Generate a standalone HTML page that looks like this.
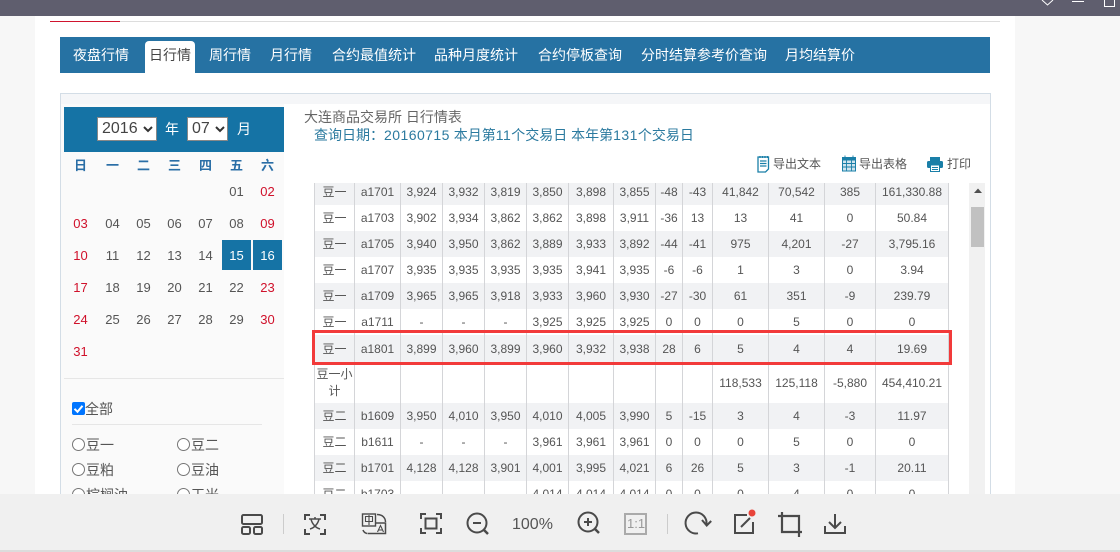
<!DOCTYPE html>
<html><head><meta charset="utf-8">
<style>
*{box-sizing:border-box}
html,body{margin:0;padding:0}
body{width:1120px;height:552px;overflow:hidden;position:relative;background:#f7f7f7;font-family:"Liberation Sans","Noto Sans CJK SC",sans-serif;color:#555}
.a{position:absolute;white-space:nowrap}
.nav{top:38px;height:36px;line-height:35px;font-size:14px;color:#fff;position:absolute;white-space:nowrap}
.wk,.d{position:absolute;width:29px;text-align:center;font-size:13px;height:20px;line-height:20px}
.wk{font-weight:bold;color:#2a6ea6;top:156px}
.r{color:#d0112b}
.sel{position:absolute;top:117px;height:24px;background:#fff;border:1px solid #888;font-size:16px;line-height:22px;color:#444;padding-left:4px}
.sel svg{position:absolute;top:8px}
.lbl{position:absolute;font-size:14px;line-height:20px;color:#555;white-space:nowrap}
.rd{position:absolute;width:13px;height:13px;border:1px solid #767676;border-radius:50%;background:#fff}
table{position:absolute;left:314px;top:183px;border-collapse:separate;border-spacing:0;table-layout:fixed;width:635px;font-size:12px;color:#555}
td{border-left:1px solid #d4d5d8;text-align:center;height:26px;padding:0;line-height:17px;overflow:hidden;white-space:nowrap}
td:last-child{border-right:1px solid #d4d5d8}
tr.s td{background:#f1f2f4}
tr.f td{height:22px;padding-bottom:4px}
tr.p td{padding-top:1px}
.n{letter-spacing:.45px}
</style></head><body>
<div class="a" style="left:35px;top:16px;width:980px;height:480px;background:#fff"></div>
<div class="a" style="left:0;top:0;width:1120px;height:16px;background:#5f5e6e"></div>
<svg class="a" style="left:1040px;top:0" width="80" height="8" viewBox="0 0 80 8" fill="none" stroke="#fff" stroke-width="1"><path d="M2 0l5.500 5L13 0"/><path d="M32 1.500h12"/><path d="M64.500 0v6.500h10V0"/></svg>
<div class="a" style="left:50px;top:21px;width:950px;height:1px;background:#ddd"></div>
<div class="a" style="left:50px;top:21px;width:70px;height:1px;background:#d0142e"></div>

<div class="a" style="left:60px;top:37px;width:930px;height:36px;background:#2672a3"></div>
<div class="a" style="left:145px;top:41px;width:50px;height:32px;background:#fff;border-radius:4px 4px 0 0"></div>
<div class="nav" style="left:73px">夜盘行情</div>
<div class="nav" style="left:149px;color:#444">日行情</div>
<div class="nav" style="left:209px">周行情</div>
<div class="nav" style="left:270px">月行情</div>
<div class="nav" style="left:332px">合约最值统计</div>
<div class="nav" style="left:434px">品种月度统计</div>
<div class="nav" style="left:538px">合约停板查询</div>
<div class="nav" style="left:641px">分时结算参考价查询</div>
<div class="nav" style="left:785px">月均结算价</div>

<div class="a" style="left:60px;top:93px;width:931px;height:420px;border:1px solid #d3dde6;background:#fff"></div>
<div class="a" style="left:61px;top:94px;width:929px;height:10px;background:#f5f6f8"></div>
<div class="a" style="left:61px;top:104px;width:223px;height:400px;background:#fafafa"></div>
<div class="a" style="left:64px;top:107px;width:220px;height:45px;background:#1573a5"></div>
<div class="sel" style="left:97px;width:60px">2016<svg style="left:45px" width="10" height="7" viewBox="0 0 10 7" fill="none" stroke="#333" stroke-width="2"><path d="M1 1l4 4 4-4"/></svg></div>
<div class="a" style="left:165px;top:119px;font-size:14px;line-height:20px;color:#fff">年</div>
<div class="sel" style="left:187px;width:41px">07<svg style="left:27px" width="10" height="7" viewBox="0 0 10 7" fill="none" stroke="#333" stroke-width="2"><path d="M1 1l4 4 4-4"/></svg></div>
<div class="a" style="left:237px;top:119px;font-size:14px;line-height:20px;color:#fff">月</div>

<div class="wk" style="left:66px">日</div><div class="wk" style="left:98px">一</div><div class="wk" style="left:129px">二</div><div class="wk" style="left:160px">三</div><div class="wk" style="left:191px">四</div><div class="wk" style="left:222px">五</div><div class="wk" style="left:253px">六</div>

<div class="a" style="left:222px;top:240px;width:29px;height:30px;background:#1573a5"></div>
<div class="a" style="left:253px;top:240px;width:29px;height:30px;background:#1573a5"></div>

<div class="d" style="left:222px;top:182px">01</div><div class="d r" style="left:253px;top:182px">02</div>
<div class="d r" style="left:66px;top:214px">03</div><div class="d" style="left:98px;top:214px">04</div><div class="d" style="left:129px;top:214px">05</div><div class="d" style="left:160px;top:214px">06</div><div class="d" style="left:191px;top:214px">07</div><div class="d" style="left:222px;top:214px">08</div><div class="d r" style="left:253px;top:214px">09</div>
<div class="d r" style="left:66px;top:246px">10</div><div class="d" style="left:98px;top:246px">11</div><div class="d" style="left:129px;top:246px">12</div><div class="d" style="left:160px;top:246px">13</div><div class="d" style="left:191px;top:246px">14</div><div class="d" style="left:222px;top:246px;color:#fff">15</div><div class="d" style="left:253px;top:246px;color:#fff">16</div>
<div class="d r" style="left:66px;top:278px">17</div><div class="d" style="left:98px;top:278px">18</div><div class="d" style="left:129px;top:278px">19</div><div class="d" style="left:160px;top:278px">20</div><div class="d" style="left:191px;top:278px">21</div><div class="d" style="left:222px;top:278px">22</div><div class="d r" style="left:253px;top:278px">23</div>
<div class="d r" style="left:66px;top:310px">24</div><div class="d" style="left:98px;top:310px">25</div><div class="d" style="left:129px;top:310px">26</div><div class="d" style="left:160px;top:310px">27</div><div class="d" style="left:191px;top:310px">28</div><div class="d" style="left:222px;top:310px">29</div><div class="d r" style="left:253px;top:310px">30</div>
<div class="d r" style="left:66px;top:342px">31</div>

<div class="a" style="left:64px;top:378px;width:220px;height:1px;background:#e6e6e6"></div>
<svg class="a" style="left:72px;top:402px" width="13" height="13" viewBox="0 0 13 13"><rect width="13" height="13" rx="2" fill="#0075ff"/><path d="M2.500 6.800l3 3 5-6" fill="none" stroke="#fff" stroke-width="2"/></svg>
<div class="lbl" style="left:85px;top:399px">全部</div>
<div class="a" style="left:72px;top:424px;width:190px;height:1px;background:#e6e6e6"></div>
<div class="rd" style="left:72px;top:438px"></div><div class="lbl" style="left:86px;top:435px">豆一</div>
<div class="rd" style="left:177px;top:438px"></div><div class="lbl" style="left:191px;top:435px">豆二</div>
<div class="rd" style="left:72px;top:463px"></div><div class="lbl" style="left:86px;top:460px">豆粕</div>
<div class="rd" style="left:177px;top:463px"></div><div class="lbl" style="left:191px;top:460px">豆油</div>
<div class="rd" style="left:72px;top:488px"></div><div class="lbl" style="left:86px;top:485px">棕榈油</div>
<div class="rd" style="left:177px;top:488px"></div><div class="lbl" style="left:191px;top:485px">玉米</div>

<div class="a" style="left:304px;top:108px;font-size:14px;line-height:18px;color:#666">大连商品交易所 日行情表</div>
<div class="a" style="left:314px;top:126px;font-size:14px;line-height:18px;color:#2b7a9f">查询日期：<span class="n">20160715</span> 本月第<span class="n">11</span>个交易日 本年第<span class="n">131</span>个交易日</div>

<svg class="a" style="left:757px;top:155px" width="13" height="18" viewBox="0 0 13 18" fill="none" stroke="#1a7fa8" stroke-width="1.300"><path d="M1 2h10.500v12l-3 3H1z"/><path d="M3 1v2M5.500 1v2M8 1v2M10.500 1v2M3 6h6.500M3 8.500h6.500M3 11h6.500"/></svg>
<div class="a" style="left:773px;top:155px;font-size:12px;line-height:18px;color:#555">导出文本</div>
<svg class="a" style="left:842px;top:155px" width="14" height="17" viewBox="0 0 14 17" fill="none" stroke="#1a7fa8" stroke-width="1"><rect x=".5" y="2.500" width="13" height="13.500" fill="#cfe4ee"/><rect x="0" y="2" width="14" height="3.500" fill="#1a7fa8" stroke="none"/><path d="M3 .5v3M11 .5v3M.5 8.500h13M.5 12h13M4.500 5.500V16M9.500 5.500V16" stroke-width=".9"/></svg>
<div class="a" style="left:859px;top:155px;font-size:12px;line-height:18px;color:#555">导出表格</div>
<svg class="a" style="left:927px;top:156px" width="16" height="16" viewBox="0 0 16 16"><rect x="3" y="1" width="10" height="4" fill="#1a7fa8"/><rect x="0" y="5" width="16" height="7" rx="1.500" fill="#1a7fa8"/><rect x="3.500" y="9" width="9" height="6.500" fill="#fff" stroke="#1a7fa8"/><path d="M5 11.500h6M5 13.500h6" stroke="#1a7fa8"/></svg>
<div class="a" style="left:947px;top:155px;font-size:12px;line-height:18px;color:#555">打印</div>

<table>
<colgroup><col style="width:40px"><col style="width:46px"><col style="width:42px"><col style="width:42px"><col style="width:42px"><col style="width:42px"><col style="width:45px"><col style="width:42px"><col style="width:27px"><col style="width:30px"><col style="width:56px"><col style="width:56px"><col style="width:51px"><col style="width:74px"></colgroup>
<tr class="s f"><td>豆一</td><td>a1701</td><td>3,924</td><td>3,932</td><td>3,819</td><td>3,850</td><td>3,898</td><td>3,855</td><td>-48</td><td>-43</td><td>41,842</td><td>70,542</td><td>385</td><td>161,330.88</td></tr>
<tr><td>豆一</td><td>a1703</td><td>3,902</td><td>3,934</td><td>3,862</td><td>3,862</td><td>3,898</td><td>3,911</td><td>-36</td><td>13</td><td>13</td><td>41</td><td>0</td><td>50.84</td></tr>
<tr class="s"><td>豆一</td><td>a1705</td><td>3,940</td><td>3,950</td><td>3,862</td><td>3,889</td><td>3,933</td><td>3,892</td><td>-44</td><td>-41</td><td>975</td><td>4,201</td><td>-27</td><td>3,795.16</td></tr>
<tr><td>豆一</td><td>a1707</td><td>3,935</td><td>3,935</td><td>3,935</td><td>3,935</td><td>3,941</td><td>3,935</td><td>-6</td><td>-6</td><td>1</td><td>3</td><td>0</td><td>3.94</td></tr>
<tr class="s"><td>豆一</td><td>a1709</td><td>3,965</td><td>3,965</td><td>3,918</td><td>3,933</td><td>3,960</td><td>3,930</td><td>-27</td><td>-30</td><td>61</td><td>351</td><td>-9</td><td>239.79</td></tr>
<tr><td>豆一</td><td>a1711</td><td>-</td><td>-</td><td>-</td><td>3,925</td><td>3,925</td><td>3,925</td><td>0</td><td>0</td><td>0</td><td>5</td><td>0</td><td>0</td></tr>
<tr class="s p"><td style="height:27px">豆一</td><td>a1801</td><td>3,899</td><td>3,960</td><td>3,899</td><td>3,960</td><td>3,932</td><td>3,938</td><td>28</td><td>6</td><td>5</td><td>4</td><td>4</td><td>19.69</td></tr>
<tr class="p"><td style="height:41px">豆一小<br>计</td><td></td><td></td><td></td><td></td><td></td><td></td><td></td><td></td><td></td><td>118,533</td><td>125,118</td><td>-5,880</td><td>454,410.21</td></tr>
<tr class="s"><td>豆二</td><td>b1609</td><td>3,950</td><td>4,010</td><td>3,950</td><td>4,010</td><td>4,005</td><td>3,990</td><td>5</td><td>-15</td><td>3</td><td>4</td><td>-3</td><td>11.97</td></tr>
<tr><td>豆二</td><td>b1611</td><td>-</td><td>-</td><td>-</td><td>3,961</td><td>3,961</td><td>3,961</td><td>0</td><td>0</td><td>0</td><td>5</td><td>0</td><td>0</td></tr>
<tr class="s"><td>豆二</td><td>b1701</td><td>4,128</td><td>4,128</td><td>3,901</td><td>4,001</td><td>3,995</td><td>4,021</td><td>6</td><td>26</td><td>5</td><td>3</td><td>-1</td><td>20.11</td></tr>
<tr><td>豆二</td><td>b1703</td><td>-</td><td>-</td><td>-</td><td>4,014</td><td>4,014</td><td>4,014</td><td>0</td><td>0</td><td>0</td><td>4</td><td>0</td><td>0</td></tr>
</table>

<div class="a" style="left:312px;top:330px;width:640px;height:35px;border:3px solid #f23a3a"></div>

<div class="a" style="left:969px;top:183px;width:16px;height:320px;background:#f1f1f1"></div>
<div class="a" style="left:971px;top:207px;width:13px;height:40px;background:#c1c1c1"></div>
<svg class="a" style="left:974px;top:188px" width="8" height="6" viewBox="0 0 8 6"><path d="M0 5l4-4.500L8 5z" fill="#505050"/></svg>

<div class="a" style="left:0;top:494px;width:1120px;height:58px;background:#f0f0f0"></div>
<div class="a" style="left:0;top:550px;width:1120px;height:2px;background:#dcdcdc"></div>

<svg class="a" style="left:0;top:494px" width="1120" height="58" viewBox="0 494 1120 58" fill="none" stroke="#4a4a4a" stroke-width="2">
<rect x="242" y="515" width="20" height="9" rx="1.500"/><rect x="242" y="527" width="8" height="7" rx="1.500"/><rect x="254" y="527" width="8" height="7" rx="1.500"/>
<path d="M283.500 514v20" stroke="#ccc" stroke-width="1"/>
<path d="M305 520v-5h5M320 515h5v5M325 529v5h-5M310 534h-5v-5"/>
<path d="M309 519h12M315 517v2M319 519c-1 5-5 9-9 10M311 519c1 5 5 9 9 10" stroke-width="1.500"/>
<rect x="362.500" y="514" width="13" height="12" stroke-width="1.400"/><path d="M365.500 516.500h7v5h-7zM369 515v10" stroke-width="1.100"/>
<path d="M367.500 533.500h18v-10.500h-10" stroke-width="1.500"/><path d="M377 514.500c5 0 8.500 3 8.500 7.500" stroke-width="1.500"/><path d="M363 530c.5 1.500 2 3 4 3.500" stroke-width="1.500"/>
<path d="M377.500 532l3-6.500 3 6.500M378.500 530h4" stroke-width="1.100"/>
<path d="M421 519v-5h5M436 514h5v5M441 528v5h-5M426 533h-5v-5"/><rect x="425.500" y="518.500" width="11" height="10" stroke-width="2"/>
<circle cx="477" cy="523" r="9.500"/><path d="M473 523h8"/><path d="M484 530l4 4" stroke-width="2.500"/>
<circle cx="588" cy="522" r="9.500"/><path d="M584 522h8M588 518v8"/><path d="M595 529l4 4" stroke-width="2.500"/>
<rect x="625" y="514" width="21" height="20" stroke="#aaa"/>
<path d="M667.500 514v20" stroke="#ccc" stroke-width="1"/>
<path d="M698 533.300A10.500 10.500 0 1 1 706.500 524"/><path d="M702 520l4.700 5.500 4.500-4.500"/>
<path d="M747 515h-12v18h18v-11"/><path d="M741 527l9-9"/><circle cx="752" cy="513" r="3.500" fill="#e8443a" stroke="none"/>
<path d="M782 512v20h20M778 516h21v21" stroke-width="2.200"/>
<path d="M825 526v7h20v-7"/><path d="M835 514v14M829 522l6 6 6-6"/>
</svg>
<div class="a" style="left:512px;top:515px;font-size:16px;line-height:20px;color:#555">100%</div>
<div class="a" style="left:627px;top:516px;font-size:13px;line-height:16px;width:17px;text-align:center;color:#999">1:1</div>
</body></html>
